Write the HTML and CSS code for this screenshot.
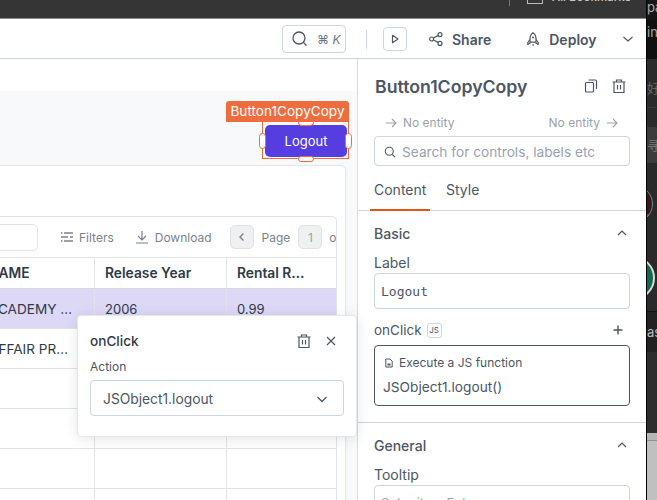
FILE: index.html
```html
<!DOCTYPE html>
<html lang="en">
<head>
<meta charset="utf-8">
<title>Button1CopyCopy</title>
<link rel="stylesheet" href="styles.css">
</head>
<body>
<div class="app">
  <div class="browserbar">
    <span class="bar-sep"></span>
    <span class="bm-icon"></span>
    <span class="bm-text">All Bookmarks</span>
  </div>
  <header class="header">
    <div class="omni">
      <svg class="ic16" viewBox="0 0 16 16"><circle cx="7" cy="7" r="6" fill="none" stroke="#4c5664" stroke-width="1.3"/><path d="M11.400 11.400l3.100 3.100" stroke="#4c5664" stroke-width="1.300" fill="none"/></svg>
      <span class="omni-key">⌘ <i>K</i></span>
    </div>
    <span class="head-sep"></span>
    <div class="play"><svg class="ic12" viewBox="0 0 12 12"><path d="M3.500 2.300v7.400L9 6z" fill="none" stroke="#4c5664" stroke-width="1.200" stroke-linejoin="round"/></svg></div>
    <div class="head-btn share">
      <svg class="ic14" viewBox="0 0 14 14"><g fill="none" stroke="#4c5664" stroke-width="1.200"><circle cx="2.600" cy="7" r="2"/><circle cx="11" cy="2.600" r="2"/><circle cx="11" cy="11.400" r="2"/><path d="M4.500 6l4.600-2.400M4.500 8l4.600 2.400"/></g></svg>
      <span>Share</span>
    </div>
    <div class="head-btn deploy">
      <svg class="ic14" viewBox="0 0 14 14"><g fill="none" stroke="#4c5664" stroke-width="1.200" stroke-linejoin="round"><path d="M7 .8C4.700 2.300 4 4.800 4 7v3.200h6V7c0-2.200-.7-4.700-3-6.200z"/><path d="M4 7.500L1.800 10.500v2l2.700-1.800M10 7.500l2.200 3v2l-2.700-1.800M6 13h2"/></g><circle cx="7" cy="5.600" r="1" fill="#4c5664"/></svg>
      <span>Deploy</span>
    </div>
    <svg class="ic12 caret" viewBox="0 0 12 12"><path d="M1.500 4l4.500 4 4.500-4" fill="none" stroke="#4c5664" stroke-width="1.200"/></svg>
  </header>
  <main class="main">
    <section class="canvas">
      <div class="canvas-top"></div>
      <div class="widget-tag">Button1CopyCopy</div>
      <div class="widget-sel">
        <button class="logout">Logout</button>
        <span class="handle h-top"></span>
        <span class="handle h-bottom"></span>
        <span class="handle h-left"></span>
        <span class="handle h-right"></span>
      </div>
      <div class="card">
        <div class="table">
          <div class="toolbar">
            <div class="tsearch"></div>
            <div class="tool filters">
              <svg class="ic14" viewBox="0 0 14 14"><path d="M1 3h1.500M4 3h9M1 7h7M10 7h3M1 11h1.500M4 11h9" fill="none" stroke="#7b828c" stroke-width="1.600"/></svg>
              <span>Filters</span>
            </div>
            <div class="tool download">
              <svg class="ic14" viewBox="0 0 14 14"><path d="M7 1v8.500M3 6l4 4 4-4M1 13h12" fill="none" stroke="#7b828c" stroke-width="1.200"/></svg>
              <span>Download</span>
            </div>
            <div class="pager-btn prev"><svg class="ic10" viewBox="0 0 10 10"><path d="M6.500 1.500L3 5l3.500 3.500" fill="none" stroke="#7b828c" stroke-width="1.400"/></svg></div>
            <span class="page-word">Page</span>
            <div class="pager-btn page-num">1</div>
            <span class="page-of">of</span>
          </div>
          <div class="row head"><div class="c c1">NAME</div><div class="c c2">Release Year</div><div class="c c3">Rental R…</div></div>
          <div class="row body selected"><div class="c c1">ACADEMY …</div><div class="c c2">2006</div><div class="c c3">0.99</div></div>
          <div class="row body"><div class="c c1">AFFAIR PR…</div><div class="c c2"></div><div class="c c3"></div></div>
          <div class="row body"><div class="c c1"></div><div class="c c2"></div><div class="c c3"></div></div>
          <div class="row body"><div class="c c1"></div><div class="c c2"></div><div class="c c3"></div></div>
          <div class="row body"><div class="c c1"></div><div class="c c2"></div><div class="c c3"></div></div>
          <div class="row body"><div class="c c1"></div><div class="c c2"></div><div class="c c3"></div></div>
        </div>
      </div>
    </section>
    <aside class="pane">
      <div class="pane-title">
        <h1>Button1CopyCopy</h1>
        <div class="title-icons">
          <svg class="ic16" viewBox="0 0 16 16"><g fill="none" stroke="#4c5664" stroke-width="1.200"><rect x="2.500" y="4.500" width="8" height="9.500" rx="1"/><path d="M5.500 2h7a1 1 0 0 1 1 1v8"/></g></svg>
          <svg class="ic16" viewBox="0 0 16 16"><g fill="none" stroke="#4c5664" stroke-width="1.200"><path d="M1.500 4h13M5.500 4V2h5v2M3 4v10.500h10V4M6.500 7v4.500M9.500 7v4.500"/></g></svg>
        </div>
      </div>
      <div class="entity">
        <span class="ent"><svg class="ic12" viewBox="0 0 12 12"><path d="M1 6h10M7 2l4 4-4 4" fill="none" stroke="#9aa1ab" stroke-width="1.100"/></svg>No entity</span>
        <span class="ent">No entity<svg class="ic12" viewBox="0 0 12 12"><path d="M1 6h10M7 2l4 4-4 4" fill="none" stroke="#9aa1ab" stroke-width="1.100"/></svg></span>
      </div>
      <div class="pane-search">
        <svg class="ic12" viewBox="0 0 12 12"><circle cx="5.300" cy="5.300" r="4" fill="none" stroke="#4c5664" stroke-width="1.100"/><path d="M8.300 8.300l2.700 2.700" stroke="#4c5664" stroke-width="1.100"/></svg>
        <span>Search for controls, labels etc</span>
      </div>
      <nav class="tabs">
        <span class="tab active">Content</span>
        <span class="tab">Style</span>
      </nav>
      <section class="group">
        <div class="group-head"><span>Basic</span><svg class="ic12" viewBox="0 0 12 12"><path d="M2 8l4-4 4 4" fill="none" stroke="#4c5664" stroke-width="1.200"/></svg></div>
        <label class="field-label">Label</label>
        <div class="input mono">Logout</div>
        <div class="onclick-row">
          <span class="onclick-name">onClick <span class="js-chip">JS</span></span>
          <svg class="ic12" viewBox="0 0 12 12"><path d="M6 1.500v9M1.500 6h9" stroke="#4c5664" stroke-width="1.400" fill="none"/></svg>
        </div>
        <div class="action-box">
          <div class="action-type">
            <svg class="ic10" viewBox="0 0 10 10"><path d="M1.800 1h4.200l2.200 2.200V9H1.800z" fill="none" stroke="#4c5664" stroke-width="1"/><path d="M3.500 5.500h3v2h-3z" fill="#4c5664"/></svg>
            <span>Execute a JS function</span>
          </div>
          <div class="action-call">JSObject1.logout()</div>
        </div>
      </section>
      <section class="group">
        <div class="group-head"><span>General</span><svg class="ic12" viewBox="0 0 12 12"><path d="M2 8l4-4 4 4" fill="none" stroke="#4c5664" stroke-width="1.200"/></svg></div>
        <label class="field-label">Tooltip</label>
        <div class="input placeholder">Submit on Enter</div>
      </section>
    </aside>
    <div class="popup">
      <div class="popup-head">
        <span class="popup-title">onClick</span>
        <svg class="ic16" viewBox="0 0 16 16"><g fill="none" stroke="#4c5664" stroke-width="1.200"><path d="M1.500 4h13M5.500 4V2h5v2M3 4v10.500h10V4M6.500 7v4.500M9.500 7v4.500"/></g></svg>
        <svg class="ic12 popup-x" viewBox="0 0 12 12"><path d="M2 2l8 8M10 2l-8 8" fill="none" stroke="#4c5664" stroke-width="1.200"/></svg>
      </div>
      <div class="popup-label">Action</div>
      <div class="popup-select">
        <span>JSObject1.logout</span>
        <svg class="ic12" viewBox="0 0 12 12"><path d="M1.500 4l4.500 4.500L10.500 4" fill="none" stroke="#4c5664" stroke-width="1.300"/></svg>
      </div>
    </div>
  </main>
</div>
<div class="strip">
  <div class="s s0">pa</div>
  <div class="s s1">in-</div>
  <div class="s s2">好</div>
  <div class="s s2b"></div>
  <div class="s s3">寻</div>
  <div class="s s4"><span class="avatar a1"></span></div>
  <div class="s s5"><span class="avatar a2"></span></div>
  <div class="s s6">as</div>
  <div class="s s7"></div>
  <div class="s s8"></div>
  <div class="s s9"></div>
</div>
</body>
</html>
```
FILE: styles.css
```css
* { box-sizing: border-box; }
html, body { margin: 0; height: 500px; overflow: hidden; }
body { display: flex; font-family: Inter, "Noto Sans CJK SC", sans-serif; color: #4c5664; background: #1a1a1a; }
svg { display: block; flex: none; }
.ic16 { width: 16px; height: 16px; }
.ic14 { width: 14px; height: 14px; }
.ic12 { width: 12px; height: 12px; }
.ic10 { width: 10px; height: 10px; }

.app { width: 646px; height: 500px; display: flex; flex-direction: column; position: relative; background: #fff; flex: none; }
.browserbar { height: 19px; background: #353535; display: flex; align-items: flex-start; overflow: hidden; border-bottom: 1px solid #8a8a8a; flex: none; padding-left: 509px; }
.bar-sep { width: 1px; height: 6px; background: #777; margin-right: 17px; }
.bm-icon { width: 16px; height: 4px; border: 1px solid #bbb; border-top: 0; margin-right: 9px; }
.bm-text { font-size: 11.500px; line-height: 13px; margin-top: -9px; color: #c8c8c8; font-weight: 500; white-space: nowrap; }

.header { height: 40px; flex: none; display: flex; align-items: center; padding-left: 282px; border-bottom: 1px solid #c9d3df; background: #fff; }
.omni { width: 64px; height: 28px; margin-top: 1px; border: 1px solid #cdd5df; border-radius: 4px; display: flex; align-items: center; padding-left: 9px; gap: 9px; }
.omni-key { font-size: 12px; color: #6a7585; }
.head-sep { width: 1px; height: 19px; background: #cdd5df; margin: 1px 16px 0 20px; }
.play { width: 24px; height: 24px; border: 1px solid #cdd5df; border-radius: 4px; display: flex; align-items: center; justify-content: center; margin-top: 1px; }
.head-btn { display: flex; align-items: center; font-size: 14px; font-weight: 600; gap: 9px; margin-top: 1px; }
.share { margin-left: 22px; }
.deploy { margin-left: 35px; gap: 9px; }
.caret { margin-left: 25px; }

.main { flex: 1; display: flex; min-height: 0; }
.canvas { width: 357px; flex: none; position: relative; overflow: hidden; background: #f8f9fa; }
.canvas-top { height: 32px; background: #fff; }
.widget-tag { position: absolute; left: 226px; top: 42px; width: 123px; height: 21px; background: #ee6c3d; color: #fff; font-size: 13.600px; line-height: 21px; text-align: center; border-radius: 3px 3px 0 0; }
.widget-sel { position: absolute; left: 262px; top: 63px; width: 87px; height: 37px; border: 1px solid #ee6c3d; border-top: 0; padding: 3px 2px 0 2px; }
.logout { width: 82px; height: 32px; background: #553de0; color: #fff; border: 0; border-radius: 5px; font: 13px Inter, sans-serif; display: block; }
.handle { position: absolute; background: #fff; border: 1px solid #ee6c3d; border-radius: 4px; }
.h-top { width: 16px; height: 4px; left: 35px; top: 0; border-top: 0; border-radius: 0 0 4px 4px; }
.h-bottom { width: 16px; height: 6px; left: 35px; bottom: -4px; }
.h-left { width: 7px; height: 16px; left: -4px; top: 11px; }
.h-right { width: 7px; height: 16px; right: -4px; top: 11px; }

.card { position: absolute; right: 11px; top: 106px; width: 400px; height: 400px; background: #fff; border: 1px solid #e4e7eb; border-radius: 5px; box-shadow: 0 1px 3px rgba(0,0,0,.06); padding: 50px 8px 0 0; }
.table { height: 350px; border: 1px solid #e0e3e8; border-radius: 5px 5px 0 0; overflow: hidden; }
.toolbar { height: 40px; display: flex; align-items: center; font-size: 12px; color: #7b828c; white-space: nowrap; }
.tsearch { width: 91px; height: 27px; margin-left: -1px; border: 1px solid #e0e3e8; border-radius: 5px; flex: none; }
.tool { display: flex; align-items: center; gap: 5px; }
.filters { margin-left: 22px; }
.download { margin-left: 21px; gap: 6px; }
.pager-btn { width: 24px; height: 24px; background: #eef0f2; border: 1px solid #dfe2e6; border-radius: 5px; display: flex; align-items: center; justify-content: center; flex: none; }
.prev { margin-left: 18px; }
.page-word { margin: 0 8px; }
.page-num { color: #9aa1ab; }
.page-of { margin-left: 7px; }
.row { display: flex; }
.row.head { height: 32px; border-top: 1px solid #e0e3e8; border-bottom: 1px solid #d5d8dd; font-size: 13.800px; font-weight: 600; color: #2f3a48; }
.row.body { height: 40px; border-bottom: 1px solid #e0e3e8; font-size: 13px; color: #2f3a48; }
.row.selected { background: #ddd8f6; }
.c { padding: 0 10px; display: flex; align-items: center; white-space: nowrap; overflow: hidden; border-right: 1px solid #e0e3e8; }
.c1 { width: 147px; flex: none; padding-left: 40px; padding-right: 0; }
.row.body .c1 { font-size: 13.600px; padding-left: 41px; }
.c2 { width: 132px; flex: none; }
.c3 { flex: 1; border-right: 0; }

.pane { width: 289px; flex: none; background: #fff; border-left: 1px solid #d5dce6; overflow: hidden; display: flex; flex-direction: column; }
.pane-title { display: flex; align-items: center; justify-content: space-between; height: 54px; padding: 0 19px 0 17px; flex: none; }
.pane-title h1 { margin: 0; font-size: 17.700px; font-weight: 600; color: #4c5664; }
.title-icons { display: flex; gap: 12px; }
.entity { display: flex; justify-content: space-between; padding: 0 28px 0 27px; margin-top: 1px; font-size: 12px; color: #9aa1ab; height: 17px; flex: none; }
.ent { display: flex; align-items: center; gap: 6px; }
.pane-search { margin: 5px 16px 0; height: 30px; border: 1px solid #cdd5df; border-radius: 4px; display: flex; align-items: center; gap: 6px; padding: 1px 0 0 9px; font-size: 13.700px; color: #99a2b0; flex: none; }
.tabs { display: flex; height: 45px; border-bottom: 1px solid #cdd5df; padding: 0 0 0 12px; flex: none; font-size: 14px; }
.tab { padding: 15px 4px 0; height: 45px; }
.tab.active { width: 60px; border-bottom: 2px solid #e15615; padding: 15px 0 0 4px; }
.tab:not(.active) { margin-left: 12px; }
.group { padding: 0 16px; border-bottom: 1px solid #cdd5df; height: 212px; flex: none; }
.group:last-child { border-bottom: 0; }
.group-head { display: flex; align-items: center; justify-content: space-between; height: 24px; margin-top: 10px; font-size: 14px; font-weight: 500; padding-right: 2px; }
.field-label { display: block; font-size: 14px; margin-top: 9px; line-height: 17px; }
.input { height: 36px; margin-top: 2px; border: 1px solid #cdd5df; border-radius: 4px; display: flex; align-items: center; padding-left: 6px; font-size: 13px; }
.mono { font-family: "DejaVu Sans Mono", monospace; }
.placeholder { color: #99a2b0; }
.onclick-row { display: flex; align-items: center; justify-content: space-between; margin-top: 11px; height: 20px; padding-right: 6px; }
.onclick-name { font-size: 13.500px; display: flex; align-items: center; gap: 5px; }
.js-chip { font-size: 8px; border: 1px solid #cdd5df; border-radius: 3px; width: 15px; height: 15px; display: flex; align-items: center; justify-content: center; }
.action-box { height: 61px; margin-top: 5px; border: 1px solid #4c5664; border-radius: 4px; padding: 0 8px; }
.action-type { display: flex; align-items: center; gap: 5px; font-size: 12px; height: 17px; margin-top: 8px; padding-left: 1px; }
.action-call { font-size: 13.700px; margin-top: 7px; line-height: 18px; }

.popup { position: absolute; left: 77px; top: 315px; width: 280px; height: 122px; background: #fff; border: 1px solid #e4e7eb; border-radius: 4px; box-shadow: 0 2px 14px rgba(0,0,0,.1); padding: 0 12px; }
.popup-head { display: flex; align-items: center; height: 23px; margin-top: 13px; font-size: 14px; color: #2f3a48; padding-right: 7px; }
.popup-title { flex: 1; font-size: 13.600px; font-weight: 500; }
.popup-x { margin-left: 13px; }
.popup-label { font-size: 12px; margin-top: 7px; line-height: 16px; }
.popup-select { height: 36px; margin-top: 5px; border: 1px solid #cdd5df; border-radius: 4px; display: flex; align-items: center; justify-content: space-between; padding: 1px 15px 0 12px; font-size: 13.800px; }

.strip { width: 11px; flex: none; overflow: hidden; border-left: 1px solid #000; font-size: 13px; color: #aaa; }
.s { width: 11px; white-space: nowrap; overflow: hidden; }
.s0 { height: 19px; background: #161616; line-height: 14px; }
.s1 { height: 40px; background: #101010; line-height: 26px; }
.s2 { height: 49px; background: #2b2b2b; border-bottom: 1px solid #3a3a3a; color: #666; line-height: 58px; }
.s2b { height: 19px; background: #2b2b2b; }
.s3 { height: 36px; background: #3c3c3c; color: #777; line-height: 36px; }
.s4 { height: 79px; background: #2a2a2a; padding-top: 22px; }
.s5 { height: 70px; background: #2a2a2a; padding-top: 14px; border-bottom: 1px solid #111; }
.s6 { height: 40px; background: #222; line-height: 40px; color: #bbb; }
.s7 { height: 81px; background: #2d2d2d; }
.s8 { height: 8px; background: #b5b5b5; border-bottom: 1px solid #8f8f8f; }
.s9 { height: 59px; background: #c0c0c0; }
.avatar { display: block; border-radius: 50%; }
.a1 { width: 38px; height: 38px; margin-left: -32px; background: linear-gradient(#3a1a10 78%, #7b2a9a 78%); border: 1px solid #6c8a8a; }
.a2 { width: 44px; height: 44px; margin-left: -36px; background: #0f6a50; border: 2px solid #d8d8d8; }
```
